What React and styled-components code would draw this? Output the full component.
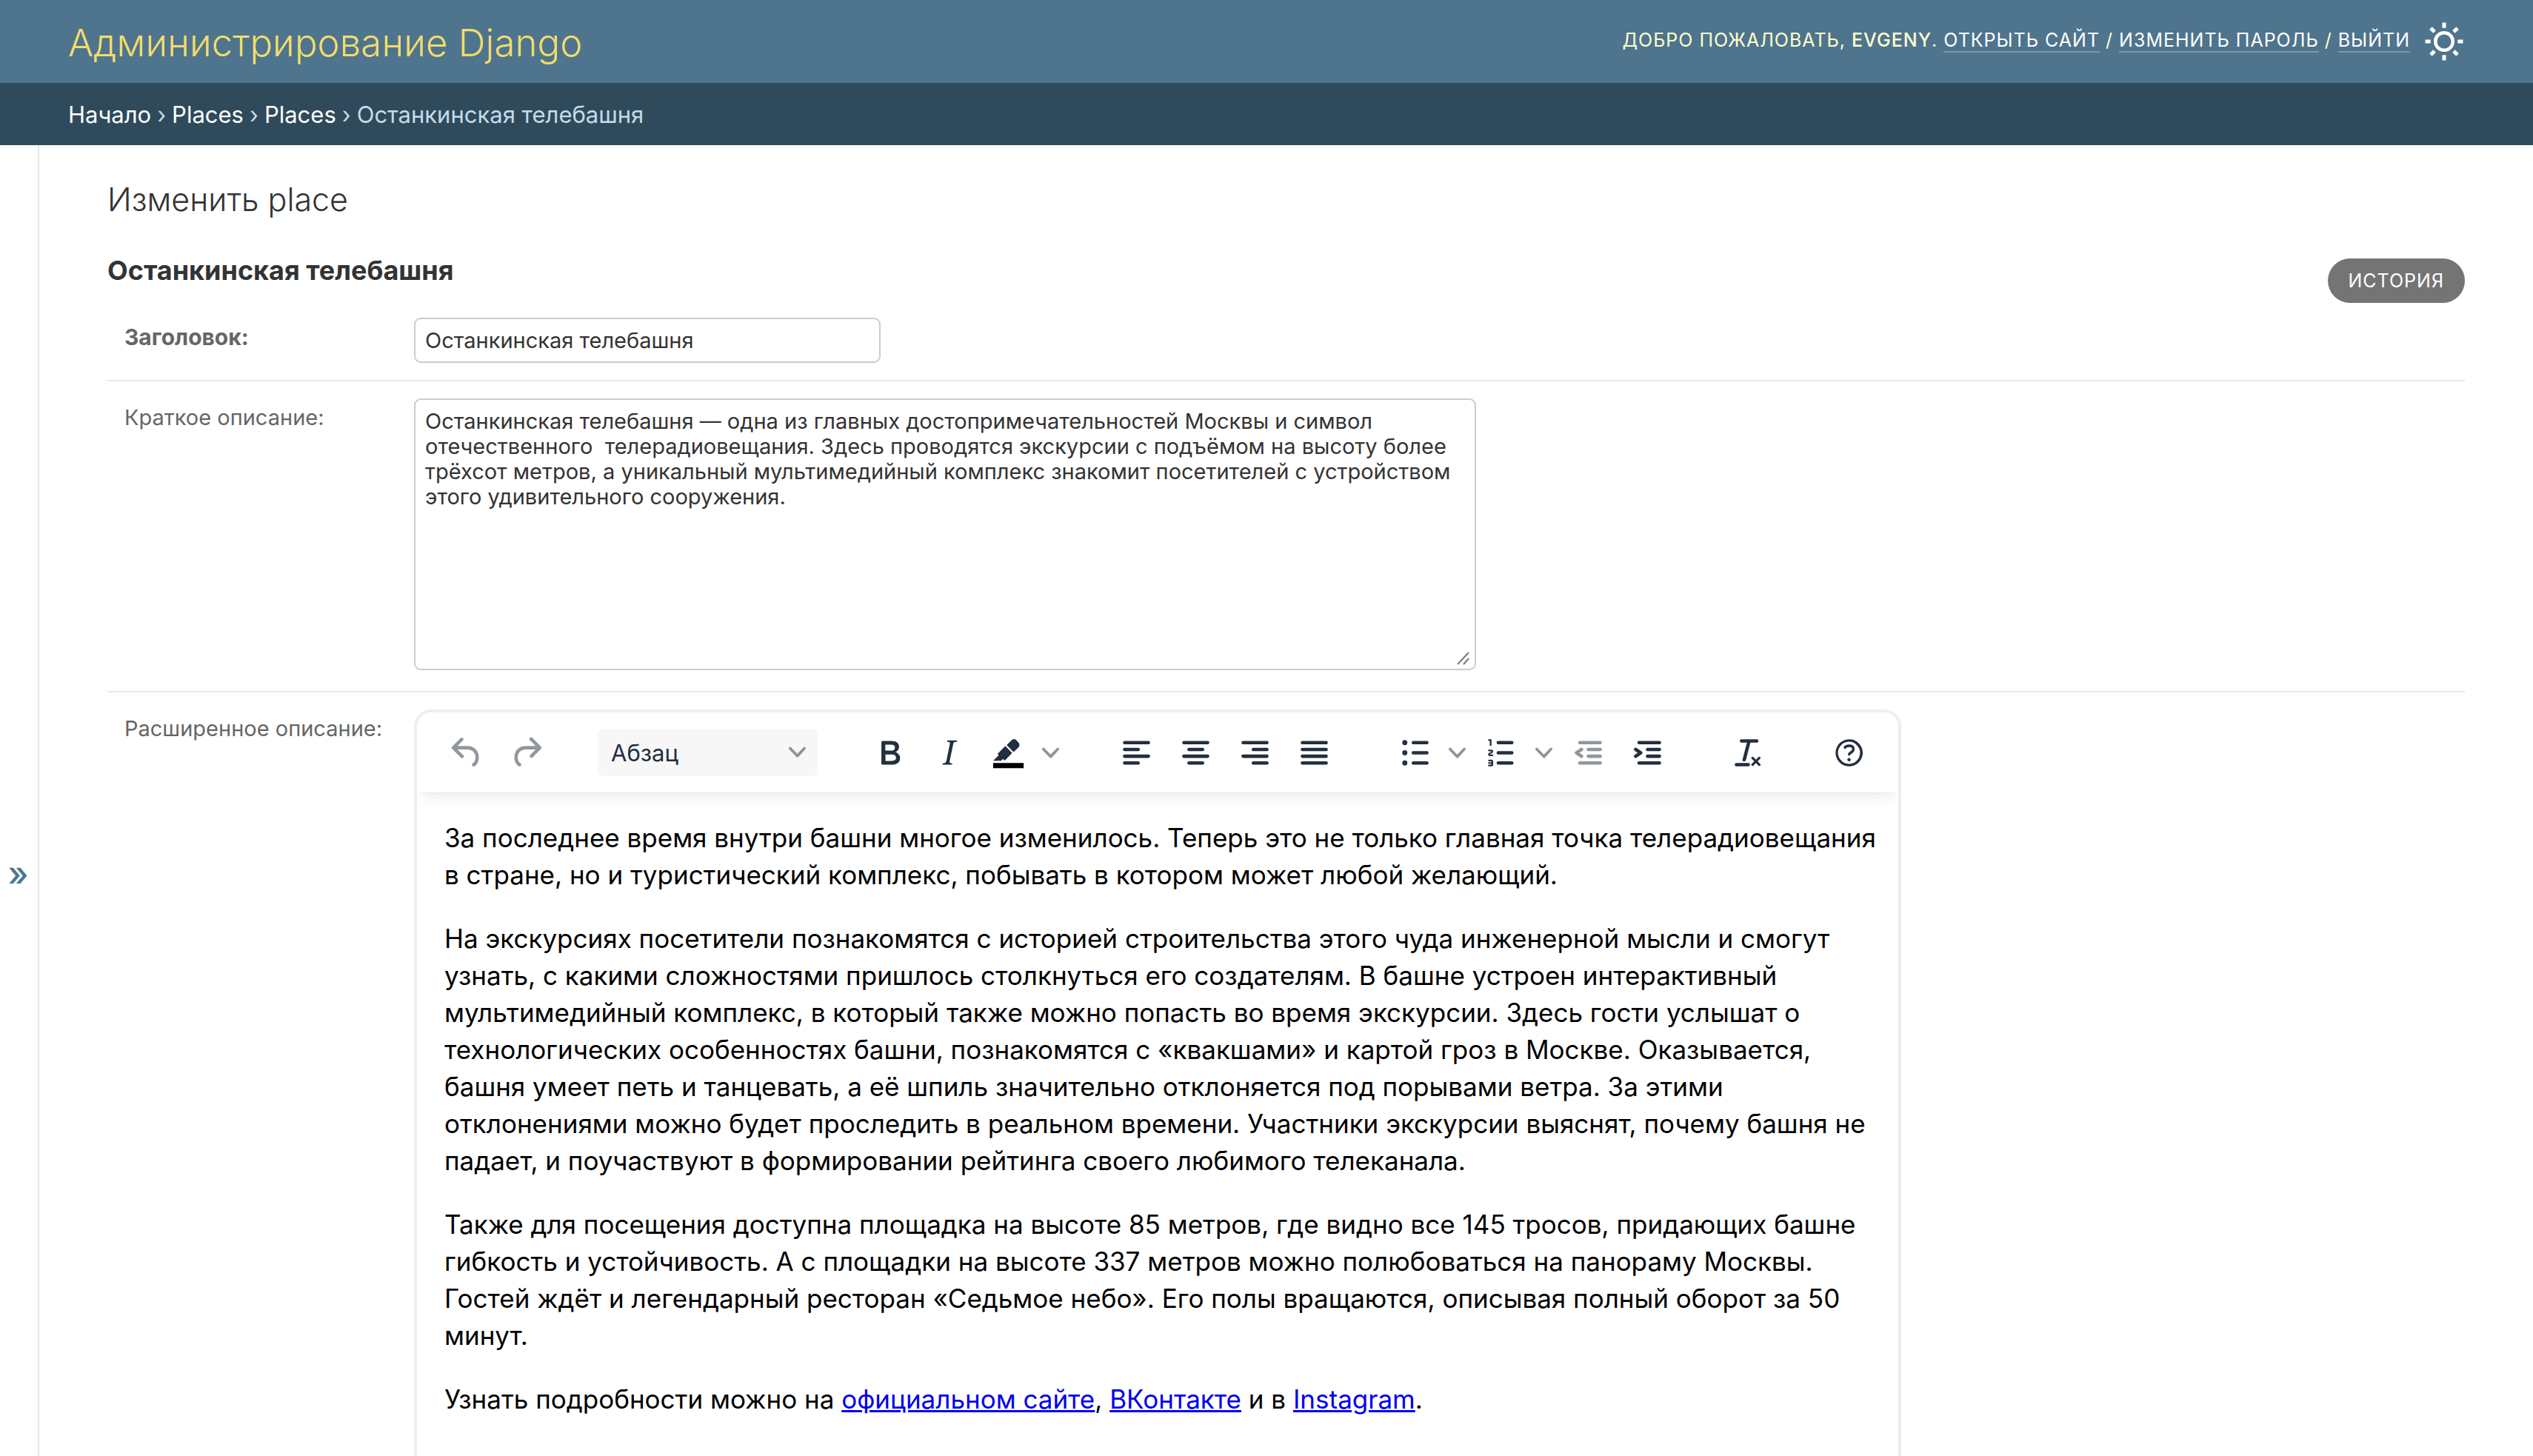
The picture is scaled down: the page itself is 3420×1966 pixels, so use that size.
import React, { useState } from 'react';
import styled, { createGlobalStyle, css } from 'styled-components';

const GlobalStyle = createGlobalStyle`
  *, *::before, *::after { box-sizing: border-box; }
  body {
    margin: 0;
    background: #fff;
    color: #333;
    font-family: Inter, Roboto, "Liberation Sans", sans-serif;
    font-size: 29px;
  }
  h1, h2, p { margin: 0; }
  button, input, textarea, select { font-family: inherit; }
`;

const Shell = styled.div`
  display: flex;
  flex-direction: column;
  height: 100vh;
  overflow: hidden;
`;

const Header = styled.header`
  display: flex;
  align-items: center;
  justify-content: space-between;
  flex: none;
  height: 112px;
  padding: 0 92px;
  background: #4f748d;
  color: #ffffcc;
`;

const Brand = styled.a`
  padding-top: 4px;
  color: #f1dc6c;
  font-size: 51px;
  font-weight: 300;
  line-height: 64px;
  text-decoration: none;
  white-space: nowrap;
`;

const UserTools = styled.div`
  display: flex;
  align-items: center;
  gap: 18px;
`;

const UserText = styled.div`
  padding-bottom: 4px;
  font-size: 25px;
  line-height: 32px;
  letter-spacing: 1px;
  text-transform: uppercase;
  white-space: nowrap;

  strong { font-weight: 500; }
`;

const UserLink = styled.a`
  color: #fff;
  text-decoration: none;
  border-bottom: 2px solid rgba(255, 255, 255, 0.25);
`;

const ThemeButton = styled.button`
  display: flex;
  padding: 0;
  border: 0;
  background: none;
  color: #fff;

  svg { width: 56px; height: 56px; }
`;

const Breadcrumbs = styled.nav`
  display: flex;
  align-items: center;
  flex: none;
  gap: 8px;
  height: 84px;
  padding: 2px 92px 0;
  background: #2f4a5b;
  color: #c4dce8;
  font-size: 31px;
  line-height: 40px;
  white-space: nowrap;

  a { color: #fff; text-decoration: none; }
`;

const Main = styled.div`
  display: flex;
  flex: 1;
  align-items: flex-start;
  min-height: 0;
  overflow: hidden;
`;

const NavToggle = styled.button`
  flex: none;
  width: 53px;
  height: 100vh;
  padding: 0 2px 0 0;
  border: 0;
  border-right: 2px solid #e8e8e8;
  background: #fff;
  color: #4c7890;
  font-size: 46px;
  font-weight: 500;
  line-height: 56px;
`;

const Content = styled.main`
  flex: 1;
  min-width: 0;
  padding: 45px 92px 92px;
`;

const PageTitle = styled.h1`
  font-size: 43px;
  font-weight: 300;
  line-height: 56px;
`;

const ObjectBar = styled.div`
  display: flex;
  align-items: flex-start;
  justify-content: space-between;
  height: 65px;
  margin-top: 44px;
`;

const ObjectName = styled.h2`
  font-size: 36px;
  font-weight: 700;
  line-height: 48px;
`;

const HistoryLink = styled.a`
  margin-top: 8px;
  padding: 0 28px;
  border-radius: 30px;
  background: #747474;
  color: #fff;
  font-size: 25px;
  line-height: 60px;
  letter-spacing: 1px;
  text-decoration: none;
  text-transform: uppercase;
`;

const FormRow = styled.div`
  display: grid;
  grid-template-columns: 391px minmax(0, 1fr);
  padding: 23px 0 23px 23px;
  border-bottom: 2px solid #e8e8e8;
`;

const Label = styled.label`
  padding-top: 6px;
  color: #666;
  font-size: ${(p) => (p.$required ? 30 : 29)}px;
  font-weight: ${(p) => (p.$required ? 700 : 400)};
  line-height: 40px;
`;

const fieldStyle = css`
  display: block;
  border: 2px solid #ccc;
  border-radius: 9px;
  background: #fff;
  color: #333;
  font-size: 29px;
  outline: none;
`;

const TextInput = styled.input`
  ${fieldStyle}
  width: 630px;
  height: 61px;
  padding: 0 13px;
`;

const AreaWrap = styled.div`
  position: relative;
  width: 1434px;
  max-width: 100%;
  margin-bottom: 5px;
`;

const TextArea = styled.textarea`
  ${fieldStyle}
  width: 100%;
  height: 367px;
  padding: 12px 13px;
  line-height: 34px;
  resize: none;
`;

const Grip = styled.svg`
  position: absolute;
  right: 9px;
  bottom: 7px;
  width: 18px;
  height: 18px;
  stroke: #777;
  stroke-width: 2;
`;

const Editor = styled.div`
  width: 2008px;
  max-width: 100%;
  border: 4px solid #eee;
  border-radius: 23px;
  overflow: hidden;
`;

const Toolbar = styled.div`
  display: flex;
  align-items: center;
  gap: 58px;
  height: 108px;
  padding: 0 28px;
  background: #fff;
  box-shadow: 0 4px 4px -4px rgba(34, 47, 62, 0.1), 0 18px 18px -9px rgba(34, 47, 62, 0.07);
`;

const Group = styled.div`
  display: flex;
  gap: 2px;
`;

const ToolButton = styled.button`
  display: flex;
  align-items: center;
  justify-content: center;
  width: ${(p) => (p.$narrow ? 37 : 78)}px;
  height: 64px;
  padding: 0;
  border: 0;
  border-radius: 7px;
  background: none;
  color: #222f3e;

  &:disabled { color: rgba(34, 47, 62, 0.5); }
`;

const Split = styled.div`
  display: flex;
`;

const Icon = styled.svg`
  width: 55px;
  height: 55px;
  fill: currentColor;
`;

const ChevronIcon = styled.svg`
  width: 23px;
  height: 23px;
  fill: #8f949c;
`;

const SelectWrap = styled.div`
  position: relative;
  width: 299px;

  ${ChevronIcon} {
    position: absolute;
    top: 20px;
    right: 16px;
    pointer-events: none;
  }
`;

const BlockSelect = styled.select`
  display: block;
  width: 100%;
  height: 64px;
  padding: 0 48px 0 18px;
  border: 0;
  border-radius: 7px;
  appearance: none;
  background: #f7f7f7;
  color: #222f3e;
  font-size: 31px;
`;

const EditorBody = styled.div`
  display: flex;
  flex-direction: column;
  gap: 36px;
  min-height: 920px;
  padding: 36px 24px 36px 37px;
  color: #000;
  font-size: 35px;
  line-height: 50px;

  a { color: #0000ee; }
`;

const bar = (x, y, w) => `M${x} ${y}h${w}a1 1 0 0 1 0 2h-${w}a1 1 0 0 1 0-2Z`;

const ICONS = {
  undo: 'M6.4 8H12c3.7 0 6.2 2 6.8 5.1.6 2.7-.4 5.6-2.3 6.8a1 1 0 0 1-1-1.8c1.1-.6 1.8-2.7 1.4-4.6-.5-2.1-2.1-3.5-4.9-3.5H6.4l3.3 3.3a1 1 0 1 1-1.4 1.4l-5-5a1 1 0 0 1 0-1.4l5-5a1 1 0 0 1 1.4 1.4L6.4 8Z',
  redo: 'M17.6 10H12c-2.8 0-4.4 1.4-4.9 3.5-.4 2 .3 4 1.4 4.6a1 1 0 1 1-1 1.8c-2-1.2-2.9-4.1-2.3-6.8.6-3 3-5.1 6.8-5.1h5.6l-3.3-3.3a1 1 0 1 1 1.4-1.4l5 5a1 1 0 0 1 0 1.4l-5 5a1 1 0 0 1-1.4-1.4l3.3-3.3Z',
  bold: 'M7.8 19c-.3 0-.5 0-.6-.2l-.2-.5V5.7c0-.2 0-.4.2-.5l.6-.2h5c1.5 0 2.7.3 3.5 1 .7.6 1.1 1.4 1.1 2.5a3 3 0 0 1-.6 1.9c-.4.6-1 1-1.6 1.2.4.1.9.3 1.3.6s.8.7 1 1.2c.4.4.5 1 .5 1.6 0 1.3-.4 2.3-1.3 3-.8.7-2.1 1-3.8 1H7.8Zm5-8.3c.6 0 1.2-.1 1.6-.5.4-.3.6-.7.6-1.3 0-1.1-.8-1.7-2.3-1.7H9.3v3.5h3.4Zm.5 6c.7 0 1.3-.1 1.7-.4.4-.4.6-.9.6-1.5s-.2-1-.7-1.4c-.4-.3-1-.4-2-.4H9.4v3.8h4Z',
  italic: 'm16.7 4.7-.1.9h-.3c-.6 0-1 0-1.4.3-.3.3-.4.6-.5 1.1l-2.1 9.8v.6c0 .5.4.8 1.4.8h.2l-.2.8H8l.2-.8h.2c1.1 0 1.8-.5 2-1.5l2-9.8.1-.5c0-.6-.4-.8-1.4-.8h-.3l.2-.9h5.8Z',
  marker: 'M7.7 16.7H3l3.3-3.3-.7-.8L10.2 8l4 4.1-4 4.2c-.2.2-.6.2-.8 0l-.6-.7-1.1 1.1Zm5-7.5L11 7.4l3-2.9a2 2 0 0 1 2.6 0L18 6c.7.7.7 2 0 2.7l-2.9 2.9-1.8-1.8-.5-.6',
  alignLeft: bar(5, 5, 14) + bar(5, 9, 8) + bar(5, 13, 14) + bar(5, 17, 8),
  alignCenter: bar(5, 5, 14) + bar(8, 9, 8) + bar(5, 13, 14) + bar(8, 17, 8),
  alignRight: bar(5, 5, 14) + bar(11, 9, 8) + bar(5, 13, 14) + bar(11, 17, 8),
  justify: bar(5, 5, 14) + bar(5, 9, 14) + bar(5, 13, 14) + bar(5, 17, 14),
  bullets:
    bar(11, 5, 8) + bar(11, 11, 8) + bar(11, 17, 8) +
    'M4.5 6a1.5 1.5 0 1 1 3 0 1.5 1.5 0 0 1-3 0ZM4.5 12a1.5 1.5 0 1 1 3 0 1.5 1.5 0 0 1-3 0ZM4.5 18a1.5 1.5 0 1 1 3 0 1.5 1.5 0 0 1-3 0Z',
  numbers:
    bar(10, 5, 8) + bar(10, 11, 8) + bar(10, 17, 8) +
    'M6 4v3.5c0 .3-.2.5-.5.5a.5.5 0 0 1-.5-.5V5h-.5a.5.5 0 0 1 0-1H6Zm-1 8.8.2.2h1.3c.3 0 .5.2.5.5s-.2.5-.5.5H4.9a1 1 0 0 1-.9-1V13c0-.4.3-.8.6-1l1.2-.4.2-.3a.2.2 0 0 0-.2-.2H4.5a.5.5 0 0 1-.5-.5c0-.3.2-.5.5-.5h1.6c.5 0 .9.4.9 1v.1c0 .4-.3.8-.6 1l-1.2.4-.2.3ZM7 17v2c0 .6-.4 1-1 1H4.5a.5.5 0 0 1 0-1h1.2c.2 0 .3-.1.3-.3 0-.2-.1-.3-.3-.3H4.4a.4.4 0 1 1 0-.8h1.3c.2 0 .3-.1.3-.3 0-.2-.1-.3-.3-.3H4.5a.5.5 0 1 1 0-1H6c.6 0 1 .4 1 1Z',
  outdent:
    bar(7, 5, 12) + bar(12, 9, 7) + bar(12, 13, 7) + bar(7, 17, 12) +
    'M8.6 13.2a1 1 0 0 1-1.2 1.6l-3-2a1 1 0 0 1 0-1.6l3-2a1 1 0 0 1 1.2 1.6L6.8 12l1.8 1.2Z',
  indent:
    bar(7, 5, 12) + bar(12, 9, 7) + bar(12, 13, 7) + bar(7, 17, 12) +
    'M4.4 13.2 6.2 12l-1.8-1.2a1 1 0 0 1 1.2-1.6l3 2a1 1 0 0 1 0 1.6l-3 2a1 1 0 1 1-1.2-1.6Z',
  clear: 'M13.2 6a1 1 0 0 1 0 .2l-2.6 10a1 1 0 0 1-1 .8h-.2a.8.8 0 0 1-.8-1l2.6-10H8a1 1 0 1 1 0-2h9a1 1 0 0 1 0 2h-3.8ZM5 18h7a1 1 0 0 1 0 2H5a1 1 0 0 1 0-2Zm13 1.5L16.5 18 15 19.5a.7.7 0 0 1-1-1l1.5-1.5-1.5-1.5a.7.7 0 0 1 1-1l1.5 1.5 1.5-1.5a.7.7 0 0 1 1 1L17.5 17l1.5 1.5a.7.7 0 0 1-1 1Z',
  help: 'M12 5.5a6.5 6.5 0 0 0-6 9 6.3 6.3 0 0 0 1.4 2l1 1a6.3 6.3 0 0 0 3.6 1 6.5 6.5 0 0 0 6-9 6.3 6.3 0 0 0-1.4-2l-1-1a6.3 6.3 0 0 0-3.6-1ZM12 4a7.8 7.8 0 0 1 5.7 2.3A8 8 0 1 1 12 4ZM9.6 9.7a.7.7 0 0 1-.7-.8c0-1.1 1.5-1.8 3.2-1.8 1.8 0 3.2.8 3.2 2.4 0 1.4-.4 2.1-1.5 2.8-.2 0-.3.1-.3.2a2 2 0 0 0-.8.8.8.8 0 0 1-1.4-.6c.3-.7.8-1 1.3-1.5l.4-.2c.7-.4.8-.6.8-1.5 0-.5-.6-.9-1.7-.9-.5 0-1 .1-1.4.3-.2 0-.3.1-.3.2v-.2c0 .4-.4.8-.8.8ZM11 16a1 1 0 1 1 2 0 1 1 0 0 1-2 0Z',
};

function Tool({ icon, label, disabled }) {
  return (
    <ToolButton type="button" aria-label={label} disabled={disabled}>
      <Icon viewBox="0 0 24 24" aria-hidden="true">
        {icon === 'marker' && <path d="M3 18h18v3H3z" fill="#000" />}
        <path d={ICONS[icon]} fillRule={icon === 'help' ? 'evenodd' : undefined} />
      </Icon>
    </ToolButton>
  );
}

function Chevron() {
  return (
    <ChevronIcon viewBox="0 0 10 10" aria-hidden="true">
      <path d="M8.7 2.2c.3-.3.8-.3 1 0 .4.4.4.9 0 1.2L5.7 7.8c-.3.3-.9.3-1.2 0L.2 3.4a.8.8 0 0 1 0-1.2c.3-.3.8-.3 1.1 0L5 6l3.7-3.8Z" />
    </ChevronIcon>
  );
}

function SplitTool({ icon, label }) {
  return (
    <Split>
      <Tool icon={icon} label={label} />
      <ToolButton type="button" $narrow aria-label={`${label}: меню`}>
        <Chevron />
      </ToolButton>
    </Split>
  );
}

function SunIcon() {
  return (
    <svg viewBox="-28 -28 56 56" fill="none" stroke="currentColor" aria-hidden="true">
      <circle r="11.8" strokeWidth="4.5" />
      {[0, 45, 90, 135, 180, 225, 270, 315].map((angle) => (
        <path key={angle} d="M0-18.3V-25.5" strokeWidth="5" transform={`rotate(${angle})`} />
      ))}
    </svg>
  );
}

const SUMMARY =
  'Останкинская телебашня — одна из главных достопримечательностей Москвы и символ отечественного  телерадиовещания. Здесь проводятся экскурсии с подъёмом на высоту более трёхсот метров, а уникальный мультимедийный комплекс знакомит посетителей с устройством этого удивительного сооружения.';

export default function App() {
  const [title, setTitle] = useState('Останкинская телебашня');
  const [summary, setSummary] = useState(SUMMARY);

  return (
    <Shell>
      <GlobalStyle />
      <Header>
        <Brand href="#">Администрирование Django</Brand>
        <UserTools>
          <UserText>
            Добро пожаловать, <strong>Evgeny</strong>. <UserLink href="#">Открыть сайт</UserLink> /{' '}
            <UserLink href="#">Изменить пароль</UserLink> / <UserLink href="#">Выйти</UserLink>
          </UserText>
          <ThemeButton type="button" aria-label="Переключить тему">
            <SunIcon />
          </ThemeButton>
        </UserTools>
      </Header>
      <Breadcrumbs>
        <a href="#">Начало</a>
        <span>›</span>
        <a href="#">Places</a>
        <span>›</span>
        <a href="#">Places</a>
        <span>›</span>
        <span>Останкинская телебашня</span>
      </Breadcrumbs>
      <Main>
        <NavToggle type="button">»</NavToggle>
        <Content>
          <PageTitle>Изменить place</PageTitle>
          <ObjectBar>
            <ObjectName>Останкинская телебашня</ObjectName>
            <HistoryLink href="#">История</HistoryLink>
          </ObjectBar>
          <form>
            <FormRow>
              <Label htmlFor="id_title" $required>Заголовок:</Label>
              <TextInput id="id_title" type="text" value={title} onChange={(e) => setTitle(e.target.value)} />
            </FormRow>
            <FormRow>
              <Label htmlFor="id_summary">Краткое описание:</Label>
              <AreaWrap>
                <TextArea id="id_summary" value={summary} onChange={(e) => setSummary(e.target.value)} spellCheck={false} />
                <Grip viewBox="0 0 18 18" aria-hidden="true">
                  <path d="M2 17 17 1M10 17l7-8" />
                </Grip>
              </AreaWrap>
            </FormRow>
            <FormRow>
              <Label as="span">Расширенное описание:</Label>
              <Editor>
                <Toolbar role="toolbar">
                  <Group>
                    <Tool icon="undo" label="Отменить" disabled />
                    <Tool icon="redo" label="Вернуть" disabled />
                  </Group>
                  <SelectWrap>
                    <BlockSelect aria-label="Формат блока">
                      <option>Абзац</option>
                    </BlockSelect>
                    <Chevron />
                  </SelectWrap>
                  <Group>
                    <Tool icon="bold" label="Полужирный" />
                    <Tool icon="italic" label="Курсив" />
                    <SplitTool icon="marker" label="Цвет фона" />
                  </Group>
                  <Group>
                    <Tool icon="alignLeft" label="По левому краю" />
                    <Tool icon="alignCenter" label="По центру" />
                    <Tool icon="alignRight" label="По правому краю" />
                    <Tool icon="justify" label="По ширине" />
                  </Group>
                  <Group>
                    <SplitTool icon="bullets" label="Маркированный список" />
                    <SplitTool icon="numbers" label="Нумерованный список" />
                    <Tool icon="outdent" label="Уменьшить отступ" disabled />
                    <Tool icon="indent" label="Увеличить отступ" />
                  </Group>
                  <Group>
                    <Tool icon="clear" label="Очистить формат" />
                  </Group>
                  <Group>
                    <Tool icon="help" label="Помощь" />
                  </Group>
                </Toolbar>
                <EditorBody>
                  <p>
                    За последнее время внутри башни многое изменилось. Теперь это не только главная точка
                    телерадиовещания в стране, но и туристический комплекс, побывать в котором может любой желающий.
                  </p>
                  <p>
                    На экскурсиях посетители познакомятся с историей строительства этого чуда инженерной мысли и смогут
                    узнать, с какими сложностями пришлось столкнуться его создателям. В башне устроен интерактивный
                    мультимедийный комплекс, в который также можно попасть во время экскурсии. Здесь гости услышат о
                    технологических особенностях башни, познакомятся с «квакшами» и картой гроз в Москве. Оказывается,
                    башня умеет петь и танцевать, а её шпиль значительно отклоняется под порывами ветра. За этими
                    отклонениями можно будет проследить в реальном времени. Участники экскурсии выяснят, почему башня не
                    падает, и поучаствуют в формировании рейтинга своего любимого телеканала.
                  </p>
                  <p>
                    Также для посещения доступна площадка на высоте 85 метров, где видно все 145 тросов, придающих башне
                    гибкость и устойчивость. А с площадки на высоте 337 метров можно полюбоваться на панораму Москвы.
                    Гостей ждёт и легендарный ресторан «Седьмое небо». Его полы вращаются, описывая полный оборот за 50
                    минут.
                  </p>
                  <p>
                    Узнать подробности можно на <a href="#">официальном сайте</a>, <a href="#">ВКонтакте</a> и в{' '}
                    <a href="#">Instagram</a>.
                  </p>
                </EditorBody>
              </Editor>
            </FormRow>
          </form>
        </Content>
      </Main>
    </Shell>
  );
}
